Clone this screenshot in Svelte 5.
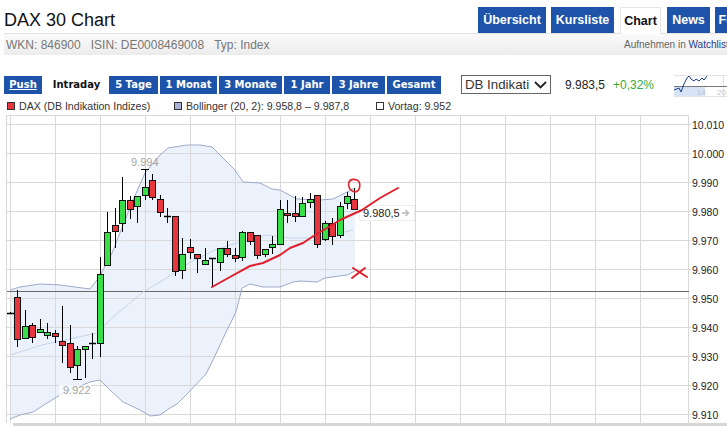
<script lang="ts">
  // DAX intraday chart page. Chart is drawn in page coordinates (viewBox starts at y=113).
  const tabs = [
    { label: 'Übersicht', w: 68 },
    { label: 'Kursliste', w: 63 },
    { label: 'Chart', w: 41, active: true },
    { label: 'News', w: 43 },
    { label: 'Forum', w: 46 },
  ]
  const periods = [
    { label: 'Push', w: 38, push: true },
    { label: 'Intraday', w: 61, active: true },
    { label: '5 Tage', w: 49 },
    { label: '1 Monat', w: 57 },
    { label: '3 Monate', w: 63 },
    { label: '1 Jahr', w: 46 },
    { label: '3 Jahre', w: 53 },
    { label: 'Gesamt', w: 54 },
  ]

  const axis = ['10.010', '10.000', '9.990', '9.980', '9.970', '9.960', '9.950', '9.940', '9.930', '9.920', '9.910']
  const gridY = axis.map((_, i) => Math.round(124 + i * 29.03) + 0.5)
  const gridX = Array.from({ length: 15 }, (_, i) => 10.5 + i * 45)

  // x, high, low, body top, body bottom, colour (r/g, k = doji)
  const candles: [number, number, number, number, number, string][] = [
    [10, 312, 313, 313, 313, 'k'],
    [17, 290, 347, 297, 339, 'r'],
    [25, 310, 338, 326, 338, 'g'],
    [32, 323, 343, 325, 337, 'r'],
    [40, 319, 332, 329, 332, 'g'],
    [47, 323, 339, 332, 335, 'g'],
    [55, 330, 343, 333, 336, 'r'],
    [62, 306, 363, 341, 345, 'r'],
    [70, 325, 373, 343, 367, 'r'],
    [77, 346, 379, 349, 365, 'g'],
    [85, 346, 378, 346, 349, 'g'],
    [92, 333, 359, 343, 343, 'k'],
    [100, 257, 357, 274, 343, 'g'],
    [107, 212, 265, 232, 265, 'g'],
    [115, 208, 248, 225, 231, 'r'],
    [122, 177, 232, 200, 223, 'g'],
    [130, 196, 219, 200, 209, 'r'],
    [137, 196, 223, 196, 206, 'g'],
    [145, 169, 200, 187, 195, 'g'],
    [152, 174, 200, 180, 197, 'r'],
    [160, 195, 217, 199, 212, 'r'],
    [167, 208, 223, 216, 216, 'k'],
    [175, 216, 276, 216, 271, 'r'],
    [182, 238, 279, 254, 270, 'g'],
    [190, 239, 259, 247, 252, 'r'],
    [197, 254, 273, 254, 258, 'r'],
    [205, 248, 264, 260, 264, 'g'],
    [212, 258, 286, 258, 258, 'k'],
    [220, 248, 271, 248, 262, 'g'],
    [227, 241, 257, 248, 254, 'r'],
    [235, 248, 262, 255, 258, 'r'],
    [242, 231, 261, 232, 257, 'g'],
    [250, 232, 245, 232, 241, 'r'],
    [257, 235, 259, 235, 255, 'r'],
    [265, 249, 257, 249, 254, 'g'],
    [272, 236, 254, 244, 247, 'g'],
    [280, 200, 245, 209, 244, 'g'],
    [287, 200, 223, 213, 215, 'r'],
    [295, 196, 222, 213, 216, 'r'],
    [302, 197, 216, 203, 216, 'g'],
    [310, 193, 208, 199, 202, 'g'],
    [317, 195, 248, 195, 244, 'r'],
    [325, 221, 241, 223, 239, 'g'],
    [332, 218, 245, 223, 236, 'r'],
    [340, 202, 238, 206, 235, 'g'],
    [347, 192, 209, 196, 203, 'g'],
    [354, 188, 209, 199, 209, 'r'],
  ]

  const upper =
    '10,290 20,287 40,284 60,285 90,289 100,276 103,270 112,253 133,200 145,173 160,155 168,148 187,145 200,145 212,147 223,158 235,170 243,182 260,183 272,189 280,190 297,199 320,200 333,199 347,192 355,188'
  const lower =
    '355,271 347,275 325,278 317,282 300,281 293,282 280,287 263,287 250,284 242,288 236,312 227,330 213,360 206,374 188,393 177,404 170,408 160,415 150,416 140,410 123,402 110,390 100,380 90,382 63,393 33,412 20,415 10,419'
  const middle =
    '10,355 42,345 97,333 113,317 143,292 180,270 190,262 215,250 240,242 267,235 290,238 320,238 353,230'
  const trend =
    '212,287 230,277 250,266 263,263 280,255 290,248 303,243 315,235 327,228 340,220 362,210 380,198 398,188'
  const mini = '674,90 679,88 681,92 684,84 687,78 689,76 691,79 694,81 696,79 699,81 702,78 704,80 707,76'
</script>

<div class="page">
  <header class="top">
    <h1>DAX 30 Chart</h1>
    <nav class="tabs">
      {#each tabs as t}
        <span class="tab" class:active={t.active} style="width:{t.w}px">{t.label}</span>
      {/each}
    </nav>
  </header>

  <div class="info">
    <span class="ids">
      <span>WKN: 846900</span>
      <span>ISIN: DE0008469008</span>
      <span>Typ: Index</span>
    </span>
    <span class="watch">Aufnehmen in <b>Watchliste</b></span>
  </div>

  <div class="controls">
    <div class="periods">
      {#each periods as p}
        <span class="period" class:active={p.active} class:push={p.push} style="width:{p.w}px">{p.label}</span>
      {/each}
    </div>
    <div class="source">
      <select>
        <option>DB Indikation Indizes</option>
      </select>
      <svg class="chevron" width="13" height="8" viewBox="0 0 13 8">
        <path d="M1 1L6.5 6.5L12 1" fill="none" stroke="#222" stroke-width="1.8" />
      </svg>
    </div>
    <span class="price">9.983,5</span>
    <span class="change">+0,32%</span>
    <svg class="mini" width="53" height="22" viewBox="674 75 53 22">
      <rect x="674" y="87" width="31" height="10" fill="#d6e3f6" />
      <path d="M674 75.5H727M674 96.5H727M723.5 75V97" stroke="#e2e2e2" fill="none" />
      <path d="M674 86.5H727" stroke="#777" fill="none" />
      <polyline points={mini} fill="none" stroke="#1d3f8f" />
      <text x="697" y="95" class="mini-label">14</text>
      <text x="717" y="95" class="mini-label">20</text>
    </svg>
  </div>

  <div class="legend">
    <span class="item dax"><i class="box red"></i>DAX (DB Indikation Indizes)</span>
    <span class="item boll"><i class="box blue"></i>Bollinger (20, 2): 9.958,8 – 9.987,8</span>
    <span class="item"><i class="box empty"></i>Vortag: 9.952</span>
  </div>

  <svg class="chart" width="727" height="310" viewBox="0 113 727 310">
    <polygon points="{upper} {lower}" fill="#b5d0f5" fill-opacity="0.27" />

    {#each gridY as y}
      <line x1="7" x2="691" y1={y} y2={y} class="grid" />
    {/each}
    {#each gridX as x}
      <line x1={x} x2={x} y1="115" y2="423" class="grid" />
    {/each}
    <path d="M6.5 423V115.5H688.5V423" class="grid" fill="none" />

    <line x1="7" x2="689" y1="291.5" y2="291.5" class="vortag" />

    <polyline points={middle} fill="none" stroke="#c6d5ea" />
    <polyline points={upper} fill="none" stroke="#9dabc9" />
    <polyline points={lower} fill="none" stroke="#9dabc9" />

    {#each candles as [x, high, low, top, bottom, c]}
      <line x1={x + 0.5} x2={x + 0.5} y1={high} y2={low} class="wick" />
      {#if c === 'k'}
        <line x1={x - 3} x2={x + 4} y1={top + 0.5} y2={top + 0.5} class="doji" />
      {:else}
        <rect x={x - 2.5} y={top + 0.5} width="6" height={bottom - top} class={c === 'r' ? 'down' : 'up'} />
      {/if}
    {/each}
    <path d="M141 169.5H149M73 379.5H82" class="wick" />

    <text x="131" y="166" class="extreme">9.994</text>
    <rect x="59" y="385" width="32" height="11" fill="#fff" fill-opacity="0.75" />
    <text x="63" y="394" class="extreme">9.922</text>

    {#each axis as label, i}
      <text x="692" y={gridY[i] + 4} class="tick">{label}</text>
    {/each}

    <rect x="359.5" y="205.5" width="55" height="15" fill="#fff" stroke="#eee" />
    <text x="363" y="217" class="last">9.980,5</text>
    <path d="M402 213H408M405.5 210L408.5 213L405.5 216" fill="none" stroke="#bbb" stroke-width="1.5" />

    <polyline points={trend} class="pen" />
    <path d="M350 181C347 184 349 191 355 192C361 191 361 182 357 180C354 179 349 179 349 183" class="pen thin" />
    <path d="M353 268L367 277M365 268L352 278" class="pen" />
  </svg>

  <div class="scrollbar"></div>
</div>

<style>
  :global(body) {
    margin: 0;
    background: #fff;
  }
  .page {
    width: 727px;
    height: 426px;
    overflow: hidden;
    font-family: 'Liberation Sans', Arial, sans-serif;
    color: #222;
  }
  .top {
    display: flex;
    justify-content: space-between;
    height: 33px;
    padding-left: 4px;
  }
  h1 {
    margin: 0;
    font-size: 18px;
    font-weight: 400;
    line-height: 40px;
    color: #111;
  }
  .tabs {
    display: flex;
    gap: 5px;
    padding-top: 7px;
    margin-right: -34px;
  }
  .tab {
    display: flex;
    flex: none;
    align-items: center;
    justify-content: center;
    font-size: 12.5px;
    font-weight: 700;
    color: #fff;
    background: #1d54a9;
  }
  .tab.active {
    margin: 0 1px;
    height: 27px;
    color: #111;
    background: #fff;
    border: 1px solid #e6e6e6;
    border-bottom: 0;
    box-sizing: border-box;
    position: relative;
  }
  .info {
    display: flex;
    justify-content: space-between;
    align-items: center;
    height: 21px;
    margin-left: 4px;
    padding-left: 2px;
    border-top: 1px solid #e3e3e3;
    background: linear-gradient(#fbfbfb, #ececec);
    color: #777;
    font-size: 12px;
  }
  .ids {
    display: flex;
    gap: 10px;
  }
  .watch {
    width: 103px;
    font-size: 10px;
    white-space: nowrap;
    color: #666;
  }
  .watch b {
    font-weight: 400;
    color: #27408b;
  }
  .controls {
    display: flex;
    align-items: center;
    height: 19px;
    margin-top: 20px;
    padding-left: 4px;
  }
  .periods {
    display: flex;
    gap: 2px;
    width: 457px;
    height: 18px;
  }
  .period {
    display: flex;
    align-items: center;
    justify-content: center;
    font-family: 'DejaVu Sans', Verdana, sans-serif;
    font-size: 10px;
    font-weight: 700;
    color: #fff;
    background: #1d54a9;
  }
  .period.push {
    text-decoration: underline;
    margin-right: 2px;
  }
  .period.active {
    color: #111;
    background: #fff;
  }
  .source {
    position: relative;
    flex: none;
    width: 90px;
    height: 19px;
    margin-right: 14px;
  }
  .source select {
    appearance: none;
    display: block;
    box-sizing: border-box;
    width: 100%;
    height: 100%;
    padding: 0 21px 0 3px;
    font-family: 'Liberation Sans', Arial, sans-serif;
    font-size: 13.3px;
    color: #333;
    background: #fff;
    border: 1px solid #666;
    border-radius: 0;
  }
  .chevron {
    position: absolute;
    top: 6px;
    right: 4px;
  }
  .price {
    font-size: 12px;
    color: #222;
    margin-right: 8px;
  }
  .change {
    font-size: 12px;
    color: #3aaa35;
    margin-right: 20px;
    width: 41px;
  }
  .mini {
    flex: none;
    align-self: flex-start;
  }
  .mini-label {
    font-size: 8px;
    fill: #c4c4c4;
  }
  .legend {
    display: flex;
    align-items: center;
    height: 15px;
    margin-top: 4px;
    padding-left: 7px;
    font-size: 10.6px;
    color: #333;
  }
  .item {
    display: flex;
    align-items: center;
    gap: 4px;
    white-space: nowrap;
  }
  .dax {
    width: 167px;
  }
  .boll {
    width: 202px;
  }
  .box {
    width: 6px;
    height: 6px;
    border: 1px solid #333;
  }
  .red {
    background: #e8363f;
  }
  .blue {
    background: #a9b5d8;
  }
  .empty {
    background: #fff;
  }
  .chart {
    display: block;
    font-family: 'Liberation Sans', Arial, sans-serif;
  }
  .grid {
    stroke: #d9d9d9;
  }
  .vortag {
    stroke: #6a6a6a;
  }
  .wick {
    stroke: #000;
    fill: none;
  }
  .doji {
    stroke: #000;
    stroke-width: 1.5;
  }
  .down {
    fill: #e8363f;
    stroke: #111;
  }
  .up {
    fill: #36de47;
    stroke: #111;
  }
  .extreme {
    font-size: 11px;
    fill: #a5a5a5;
  }
  .tick {
    font-size: 10.5px;
    fill: #222;
  }
  .last {
    font-size: 11px;
    fill: #222;
  }
  .pen {
    fill: none;
    stroke: #e0202c;
    stroke-width: 2;
    stroke-linecap: round;
    stroke-linejoin: round;
  }
  .pen.thin {
    stroke-width: 1.6;
  }
  .scrollbar {
    height: 3px;
    margin-left: 13px;
    background: #d6d6d6;
  }
</style>
